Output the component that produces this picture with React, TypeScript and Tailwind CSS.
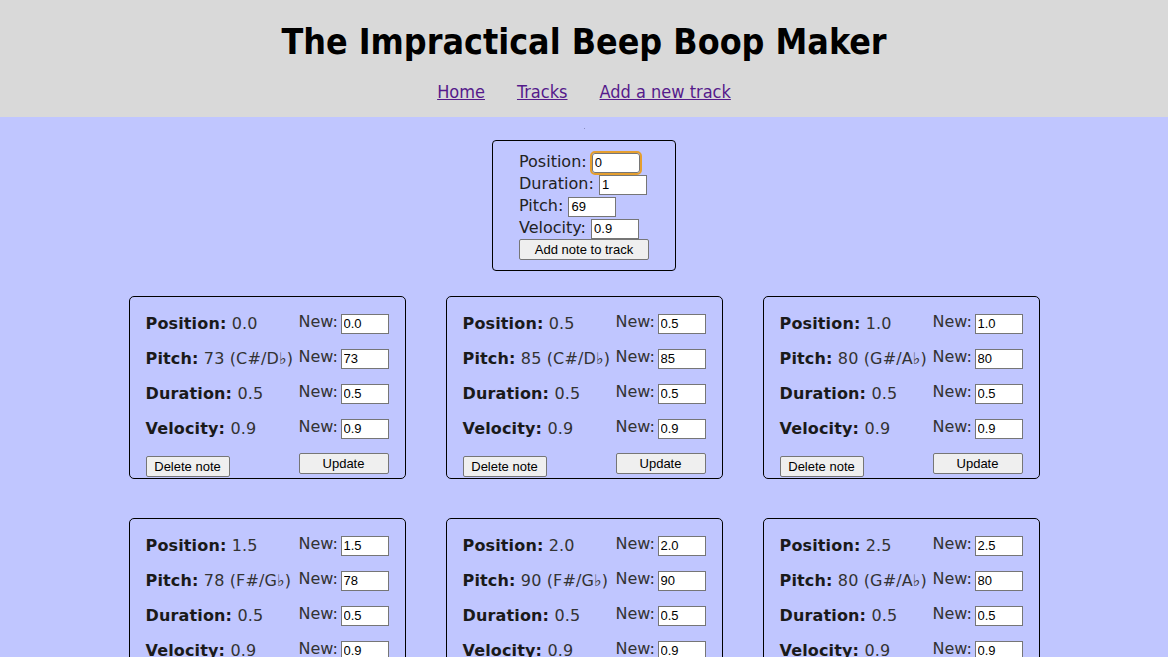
import React from "react";

const notes = [
  { pos: "0.0", pitch: "73", name: "C#/D♭", dur: "0.5", vel: "0.9" },
  { pos: "0.5", pitch: "85", name: "C#/D♭", dur: "0.5", vel: "0.9" },
  { pos: "1.0", pitch: "80", name: "G#/A♭", dur: "0.5", vel: "0.9" },
  { pos: "1.5", pitch: "78", name: "F#/G♭", dur: "0.5", vel: "0.9" },
  { pos: "2.0", pitch: "90", name: "F#/G♭", dur: "0.5", vel: "0.9" },
  { pos: "2.5", pitch: "80", name: "G#/A♭", dur: "0.5", vel: "0.9" },
];

const baseInput =
  "w-[48px] h-[20px] bg-white border border-[#767676] px-[2px] text-[13px] text-black font-['Liberation_Sans',Arial,sans-serif] [font-stretch:normal]";
const inputCls = `${baseInput} outline-none`;
const focusInputCls = `${baseInput} outline-2 outline-solid outline-[#e59f2f] rounded-[3px]`;
const btnCls =
  "h-[21px] bg-[#efefef] border border-[#767676] rounded-[2px] text-[13px] text-black font-['Liberation_Sans',Arial,sans-serif] leading-none [font-stretch:normal]";

function Row({ label, value, input }: { label: string; value: string; input: string }) {
  return (
    <div className="flex items-center h-[35px]">
      <div className="w-[153px] whitespace-nowrap text-[16px] text-[#333] tracking-[0.15px]">
        <span className="font-bold text-[#1a1a1a]">{label}:</span> {value}
      </div>
      <div className="flex items-center">
        <span className="text-[16px] text-[#333] w-[42px] -mt-[3px]">New:</span>
        <input className={inputCls} defaultValue={input} readOnly />
      </div>
    </div>
  );
}

function Card({ n }: { n: (typeof notes)[number] }) {
  return (
    <div className="w-[277px] border border-black rounded-[5px] px-[16px] pt-[9px] pb-[1px] [font-stretch:normal]">
      <Row label="Position" value={n.pos} input={n.pos} />
      <Row label="Pitch" value={`${n.pitch} (${n.name})`} input={n.pitch} />
      <Row label="Duration" value={n.dur} input={n.dur} />
      <Row label="Velocity" value={n.vel} input={n.vel} />
      <div className="flex items-start mt-[7px]">
        <button className={`${btnCls} w-[84px] mt-[3px]`}>Delete note</button>
        <button className={`${btnCls} w-[90px] h-[20px] ml-[69px]`}>Update</button>
      </div>
    </div>
  );
}

export default function App() {
  return (
    <div className="min-h-[657px] bg-[#c0c6ff] font-['DejaVu_Sans',Verdana,sans-serif]">
      <header className="bg-[#d9d9d9] h-[117px] flex flex-col items-center [font-stretch:condensed]">
        <h1 className="mt-[20px] text-[35.5px] font-bold text-black leading-[44px]">
          The Impractical Beep Boop Maker
        </h1>
        <nav className="mt-[17px] flex gap-[32px] text-[18px] leading-[22px]">
          <a href="#" className="text-[#551a8b] underline">Home</a>
          <a href="#" className="text-[#551a8b] underline">Tracks</a>
          <a href="#" className="text-[#551a8b] underline">Add a new track</a>
        </nav>
      </header>
      <div className="flex flex-col items-center">
        <div className="h-[23px] flex items-center justify-center">
          <div className="w-[1px] h-[1px] bg-[#8a8fc0]" />
        </div>
        <div className="w-[184px] border border-black rounded-[4px] px-[26px] pt-[10px] pb-[10px] text-[16px] text-[#222] leading-[22px] whitespace-nowrap">
          <div>
            Position: <input className={focusInputCls} defaultValue="0" readOnly />
          </div>
          <div>
            Duration: <input className={inputCls} defaultValue="1" readOnly />
          </div>
          <div>
            Pitch: <input className={inputCls} defaultValue="69" readOnly />
          </div>
          <div>
            Velocity: <input className={inputCls} defaultValue="0.9" readOnly />
          </div>
          <button className={`${btnCls} w-[130px] h-[20px] block`}>Add note to track</button>
        </div>
        <div className="grid grid-cols-[277px_277px_277px] gap-x-[40px] gap-y-[39px] mt-[25px] pb-[40px]">
          {notes.map((n, i) => (
            <Card key={i} n={n} />
          ))}
        </div>
      </div>
    </div>
  );
}
